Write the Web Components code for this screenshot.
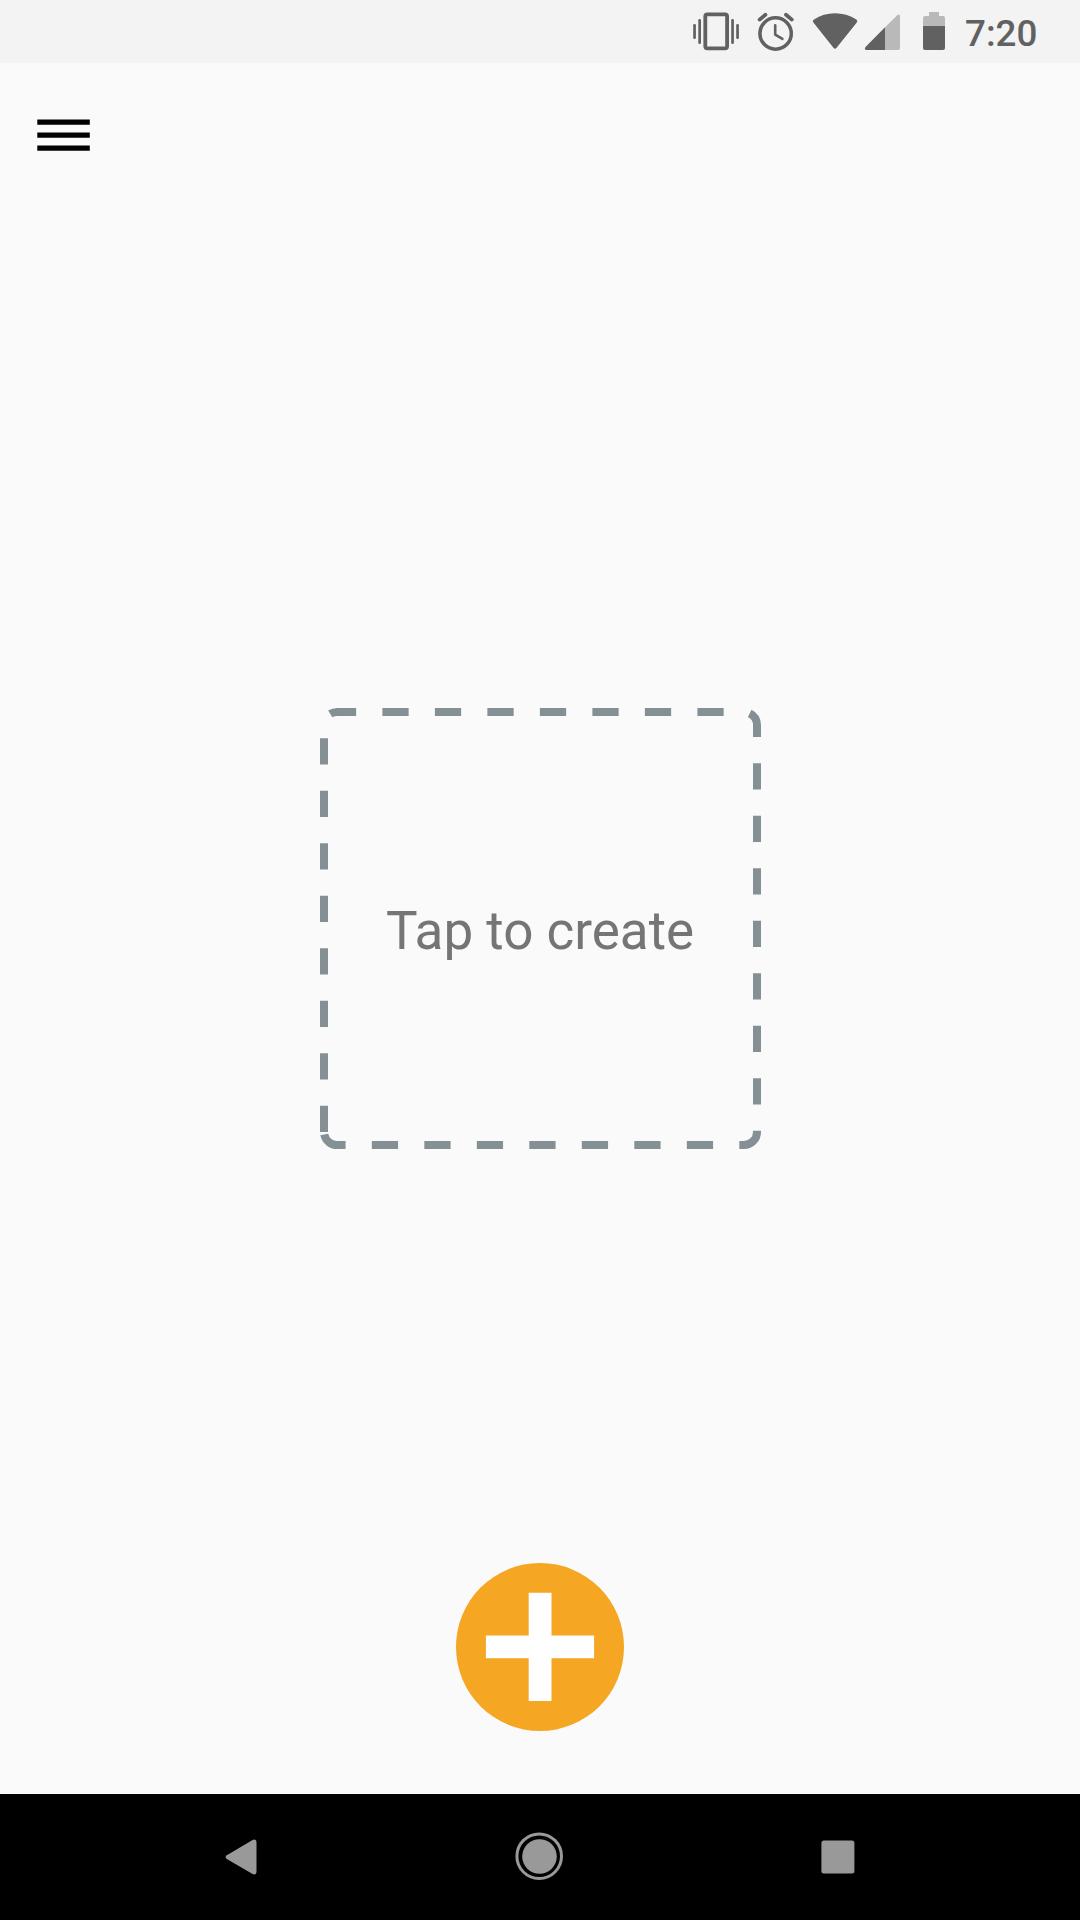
<!DOCTYPE html>
<html lang="en">
<head>
<meta charset="utf-8">
<title>Create</title>
<style>
html,body{margin:0;height:100%;background:#fafafa}
body{font-family:Roboto,sans-serif}
</style>
</head>
<body>
<app-screen>
  <status-bar slot="status">7:20</status-bar>
  <menu-button slot="menu"></menu-button>
  <create-card slot="content">Tap to create</create-card>
  <add-button slot="action"></add-button>
  <nav-bar slot="nav"></nav-bar>
</app-screen>
<script>
const define = (name, markup) => customElements.define(name, class extends HTMLElement {
  constructor() {
    super();
    this.attachShadow({ mode: 'open' }).innerHTML = markup;
  }
});

define('app-screen', `
<style>
:host{display:flex;flex-direction:column;width:1080px;height:1920px;background:#fafafa;overflow:hidden}
main{flex:1;display:flex;flex-direction:column;min-height:0}
.menu{display:flex;padding:50px 0 0 31px}
.content{display:flex;justify-content:center;padding:550px 0 0 1px}
.action{display:flex;justify-content:center;margin-top:auto;padding-bottom:63px}
</style>
<slot name="status"></slot>
<main>
  <div class="menu"><slot name="menu"></slot></div>
  <div class="content"><slot name="content"></slot></div>
  <div class="action"><slot name="action"></slot></div>
</main>
<slot name="nav"></slot>`);

define('status-bar', `
<style>
:host{display:flex;justify-content:flex-end;align-items:flex-start;height:63px;box-sizing:border-box;padding-right:42px;background:#f3f3f3;color:#616161}
svg{display:block;flex:none}
.time{font:500 36.75px/43px Roboto,sans-serif;margin:12px 0 0 0;padding-left:1px;width:73px;white-space:nowrap}
</style>
<svg width="60" height="63" viewBox="690 0 60 63" fill="#616161">
  <rect x="693.2" y="24" width="2.7" height="15" rx="1.2"/><rect x="698.3" y="19" width="2.7" height="25" rx="1.2"/>
  <rect x="731.2" y="19" width="2.7" height="25" rx="1.2"/><rect x="736.2" y="24" width="2.7" height="15" rx="1.2"/>
  <rect x="705.3" y="14.3" width="21.8" height="34" rx="2" fill="none" stroke="#616161" stroke-width="3.8"/>
</svg>
<svg width="52" height="63" viewBox="750 0 52 63" fill="none" stroke="#616161" stroke-linecap="round">
  <circle cx="775.6" cy="33.5" r="15.7" stroke-width="3.5"/>
  <path d="M759.6 19.6L765.4 14.8M791.8 19.6L786 14.8" stroke-width="3.8"/>
  <path d="M775.2 25.2V34.6L782.4 38.8" stroke-width="2.6" stroke-linejoin="round"/>
</svg>
<svg width="60" height="63" viewBox="802 0 60 63" fill="#616161">
  <path d="M813.6 22.8Q812 20.800 814 19.5Q823.400 13.2 835 13.200Q846.600 13.200 856.400 19.500Q858.200 20.800 856.600 22.800L836.400 48Q835 49.600 833.600 48Z"/>
</svg>
<svg width="50" height="63" viewBox="862 0 50 63">
  <path d="M885 27.300L897.300 15.200Q900 13.500 900 16.500V48Q900 50 898 50H885Z" fill="#b9b9b9"/>
  <path d="M885 27.300V50H866.500Q863.800 49.500 865.500 46.900Z" fill="#616161"/>
</svg>
<svg width="52" height="63" viewBox="912 0 52 63">
  <path d="M923 27V18Q923 16 925 16H929V12H939V16H943Q945 16 945 18V27Z" fill="#b9b9b9"/>
  <path d="M923 26H945V48Q945 50 943 50H925Q923 50 923 48Z" fill="#616161"/>
</svg>
<div class="time"><slot></slot></div>`);

define('menu-button', `
<style>:host{display:block;width:64px;height:45px}svg{display:block}</style>
<svg width="64" height="45" viewBox="31 113 64 45">
  <path d="M37.300 119.400h52.500v5.250h-52.500zM37.300 132.500h52.500v5.250h-52.500zM37.300 145.600h52.500v5.250h-52.500z"/>
</svg>`);

// The dashes run clockwise from the lower end of the left edge.
define('create-card', `
<style>
:host{display:grid;width:441px;height:441px;color:#757575;font:400 53px/62px Roboto,sans-serif}
svg,div{grid-area:1/1}
svg{display:block}
div{align-self:center;text-align:center;white-space:nowrap;padding:5px 1px 0 0}
</style>
<svg width="441" height="441" viewBox="0 0 441 441" fill="none" stroke="#849094" stroke-width="8">
  <path stroke-dasharray="26.250 26.250" d="M4 423.875V17.125A13.125 13.125 0 0 1 17.125 4H423.875A13.125 13.125 0 0 1 437 17.125V423.875A13.125 13.125 0 0 1 423.875 437H17.125A13.125 13.125 0 0 1 4 423.875"/>
</svg>
<div><slot></slot></div>`);

define('add-button', `
<style>:host{display:block;width:168px;height:168px}svg{display:block}</style>
<svg width="168" height="168" viewBox="0 0 168 168">
  <circle cx="84" cy="84" r="84" fill="#f5a623"/>
  <path d="M72.700 29.800h22.800v42.700h42.600v22.800H95.500v42.800H72.700V95.300H29.900V72.500h42.800z" fill="#fff"/>
</svg>`);

define('nav-bar', `
<style>
:host{display:flex;align-items:center;height:126px;box-sizing:border-box;padding:0 210px;justify-content:space-between;background:#000}
svg{display:block}
</style>
<svg width="62" height="62" viewBox="210 1826 62 62" fill="#999">
  <path d="M226.800 1855.200L252.600 1839.900Q256.500 1838.500 256.500 1842V1872Q256.500 1875.500 252.600 1874.100L226.800 1859Q224.300 1857.100 226.800 1855.200Z"/>
</svg>
<svg width="62" height="62" viewBox="509 1826 62 62">
  <circle cx="539.200" cy="1856.200" r="22.300" fill="none" stroke="#999" stroke-width="3"/>
  <circle cx="539.500" cy="1856.500" r="17.300" fill="#999"/>
</svg>
<svg width="62" height="62" viewBox="808 1826 62 62"><rect x="821.400" y="1840.400" width="33" height="33.200" rx="2.500" fill="#999"/></svg>`);
</script>
</body>
</html>
